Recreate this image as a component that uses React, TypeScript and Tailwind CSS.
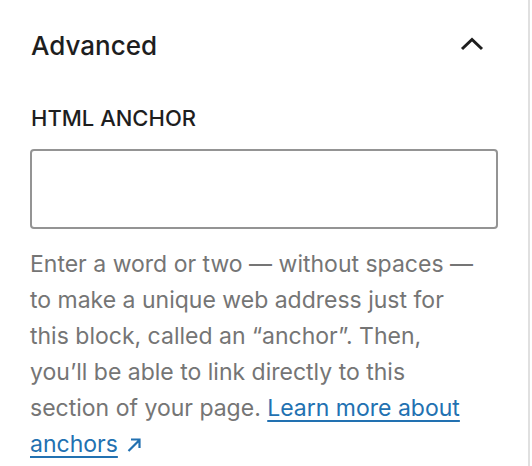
export default function App() {
  return (
    <div className="w-[532px] h-[466px] bg-white overflow-hidden">
      <div
        className="w-[530px] h-full border-r-2 border-[#e0e0e0] px-[30px] pt-[30px] text-[#1e1e1e]"
        style={{ fontFamily: "Inter, 'Noto Sans', sans-serif" }}
      >
        {/* panel header */}
        <div className="flex items-center justify-between h-[32px]">
          <h2 className="text-[26px] leading-[32px] font-medium pl-[1px]">Advanced</h2>
          <svg width="24" height="14" viewBox="0 0 24 14" className="mr-[14px] mt-[-4px]">
            <path d="M2 12 L12 2.5 L22 12" fill="none" stroke="#1e1e1e" strokeWidth="3" />
          </svg>
        </div>

        {/* field */}
        <label className="block mt-[42px] text-[22px] leading-[28px] font-medium uppercase pl-[1px]">
          HTML anchor
        </label>
        <input
          type="text"
          className="block mt-[17px] w-full h-[80px] border-2 border-[#949494] rounded-[4px] px-4 text-[22px] outline-none"
        />
        <p className="mt-[17px] w-[452px] text-[23px] leading-[36px] text-[#757575]">
          Enter a word or two — without spaces — to make a unique web address just for this block,
          called an “anchor”. Then, you’ll be able to link directly to this section of your page.{" "}
          <a
            href="#"
            className="text-[#2271b1] underline decoration-2 underline-offset-[4px]"
          >
            Learn more about anchors
          </a>
          <span className="inline-block ml-[8px] align-[-1px]">
            <svg width="16" height="16" viewBox="0 0 16 16">
              <path d="M2.5 14 L13.5 3 M5 2.5 H13.5 V11" fill="none" stroke="#2271b1" strokeWidth="2.2" />
            </svg>
          </span>
        </p>
      </div>
    </div>
  );
}
